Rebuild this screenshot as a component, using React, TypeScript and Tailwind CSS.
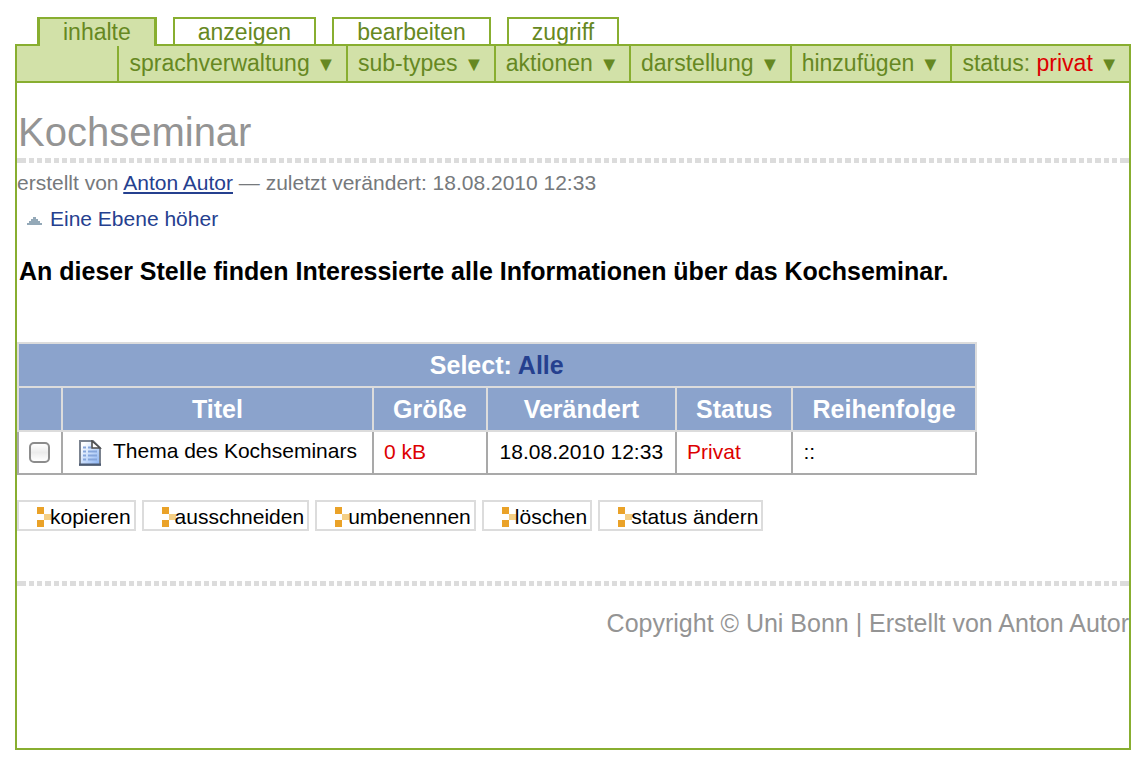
const TABS = [
  { label: "inhalte", active: true },
  { label: "anzeigen", active: false },
  { label: "bearbeiten", active: false },
  { label: "zugriff", active: false },
];

const MENUS = [
  { label: "sprachverwaltung" },
  { label: "sub-types" },
  { label: "aktionen" },
  { label: "darstellung" },
  { label: "hinzufügen" },
  { label: "status:", state: "privat" },
];

const COLUMNS = ["Titel", "Größe", "Verändert", "Status", "Reihenfolge"];

const ITEMS = [
  {
    id: "thema",
    title: "Thema des Kochseminars",
    size: "0 kB",
    modified: "18.08.2010 12:33",
    state: "Privat",
  },
];

const ACTIONS = ["kopieren", "ausschneiden", "umbenennen", "löschen", "status ändern"];

function DottedRule({ className }: { className: string }) {
  return (
    <hr
      className={`h-[5px] border-0 border-x-[3px] border-[#dcdcdc] bg-[repeating-linear-gradient(90deg,#dcdcdc_0_6px,transparent_6px_9px,#dcdcdc_9px_14px,transparent_14px_17px,#dcdcdc_17px_22px,transparent_22px_25px)] bg-origin-padding ${className}`}
    />
  );
}

function UpIcon() {
  return (
    <svg width="15" height="8" viewBox="0 0 15 8" className="mt-1" aria-hidden>
      <path d="M6 0h3v2h2v2h2v2h2v2H0V6h2V4h2V2h2z" fill="#94a9b8" />
    </svg>
  );
}

function DocumentIcon() {
  return (
    <svg width="23" height="26" viewBox="0 0 23 26" className="shrink-0" aria-hidden>
      <defs>
        <linearGradient id="page" x1="0" y1="0" x2="1" y2="1">
          <stop offset="0.15" stopColor="#ffffff" />
          <stop offset="0.55" stopColor="#c3d9fa" />
          <stop offset="1" stopColor="#86b0f2" />
        </linearGradient>
      </defs>
      <path d="M1 1h13l7 7v17H1z" fill="url(#page)" stroke="#7b838f" strokeWidth="2" />
      <path d="M0 24.500h22" stroke="#4c5b74" strokeWidth="2" />
      <path d="M13 1v7h8z" fill="#ffffff" stroke="#4e4e4e" strokeWidth="1.600" />
      <path d="M4 7.500h3m2 0h3M4 11.500h3m2 0h9M4 15.500h3m2 0h9M4 19.500h3m2 0h9" stroke="#86a6dc" strokeWidth="1.800" />
    </svg>
  );
}

function ActionIcon() {
  return (
    <svg width="14" height="20" viewBox="0 0 14 20" className="-mr-px" shapeRendering="crispEdges" aria-hidden>
      <path d="M0 0h7v7H0zM0 13h7v7H0z" fill="#eaa228" />
      <path d="M7 7h7v6H7z" fill="#f4cf85" />
    </svg>
  );
}

export default function App() {
  return (
    <div className="bg-white px-[15px] pt-[17px] pb-3 font-['Liberation_Sans',Arial,sans-serif] text-[21px] leading-6 text-black">
      <nav className="relative z-10 -mb-0.5 flex gap-4 pl-[22px] text-[23px] leading-[26px] text-[#668822]">
        {TABS.map((tab) => (
          <a
            key={tab.label}
            href="#"
            className={`border-t-2 border-[#88ae30] px-[23px] pb-px ${
              tab.active ? "border-x-[3px] bg-[#d2e1a8]" : "border-x-2"
            }`}
          >
            {tab.label}
          </a>
        ))}
      </nav>

      <div className="border-2 border-[#88ae30]">
        <div className="flex justify-end border-b-2 border-[#88ae30] bg-[#d2e1a8] text-[23px] leading-[26px] text-[#668822]">
          {MENUS.map((menu) => (
            <button
              key={menu.label}
              type="button"
              className="border-l-2 border-[#88ae30] px-2.5 pt-1 pb-[5px] whitespace-nowrap"
            >
              {menu.label} {menu.state && <span className="text-[#dd0000]">{menu.state} </span>}
              <span className="text-[20px] leading-none">▼</span>
            </button>
          ))}
        </div>

        <main>
          <h1 className="mt-[26px] pl-px text-[40px] leading-[46px] text-[#949494]">Kochseminar</h1>
          <DottedRule className="mt-[3px]" />

          <p className="mt-2 text-[#76797c]">
            erstellt von{" "}
            <a href="#" className="text-[#25408f] underline decoration-2 underline-offset-2">
              Anton Autor
            </a>{" "}
            — zuletzt verändert: 18.08.2010 12:33
          </p>
          <a href="#" className="mt-3 ml-2.5 flex w-fit items-center gap-2 text-[#25408f]">
            <UpIcon />
            Eine Ebene höher
          </a>

          <p className="mt-[26px] pl-0.5 text-[25px] leading-7 font-bold">
            An dieser Stelle finden Interessierte alle Informationen über das Kochseminar.
          </p>

          <form className="mt-[57px]">
            <table className="border-collapse whitespace-nowrap">
              <thead className="bg-[#8ba3cc] text-[25px] leading-7 text-white">
                <tr>
                  <th colSpan={6} className="border-2 border-[#dcdcdc] py-[7px]">
                    Select:{" "}
                    <a href="#" className="text-[#25408f]">
                      Alle
                    </a>
                  </th>
                </tr>
                <tr>
                  <th className="border-2 border-[#dcdcdc]" />
                  {COLUMNS.map((column) => (
                    <th key={column} className="border-2 border-[#dcdcdc] px-[19px] py-[7px]">
                      {column}
                    </th>
                  ))}
                </tr>
              </thead>
              <tbody>
                {ITEMS.map((item) => (
                  <tr key={item.id}>
                    <td className="border-2 border-t-0 border-[#a9a9a9] pr-[11px] pl-2.5">
                      <input
                        id={item.id}
                        type="checkbox"
                        aria-label={item.title}
                        className="block size-[21px] appearance-none rounded-[5px] border-2 border-[#8c8c8c] bg-linear-to-b from-white via-[#ececec] to-white"
                      />
                    </td>
                    <td className="border-2 border-t-0 border-[#a9a9a9] pr-[15px] pl-4">
                      <label htmlFor={item.id} className="flex items-center gap-[11px]">
                        <DocumentIcon />
                        <span className="pb-1">{item.title}</span>
                      </label>
                    </td>
                    <td className="border-2 border-t-0 border-[#a9a9a9] px-2.5 pt-2 pb-[9px] text-[#dd0000]">
                      {item.size}
                    </td>
                    <td className="border-2 border-t-0 border-[#a9a9a9] px-3 pt-2 pb-[9px]">{item.modified}</td>
                    <td className="border-2 border-t-0 border-[#a9a9a9] px-2.5 pt-2 pb-[9px] text-[#dd0000]">
                      {item.state}
                    </td>
                    <td className="border-2 border-t-0 border-[#a9a9a9] px-2.5 pt-2 pb-[9px]">::</td>
                  </tr>
                ))}
              </tbody>
            </table>

            <div className="mt-[25px] flex flex-wrap gap-1.5">
              {ACTIONS.map((action) => (
                <button
                  key={action}
                  type="button"
                  className="flex items-center border-2 border-[#dcdcdc] pt-[3px] pr-[3px] pl-[18px]"
                >
                  <ActionIcon />
                  {action}
                </button>
              ))}
            </div>
          </form>
        </main>

        <DottedRule className="mt-[50px]" />
        <footer className="mt-[23px] pb-[111px] text-right text-[25px] leading-7 text-[#949494]">
          Copyright © Uni Bonn | Erstellt von Anton Autor
        </footer>
      </div>
    </div>
  );
}
